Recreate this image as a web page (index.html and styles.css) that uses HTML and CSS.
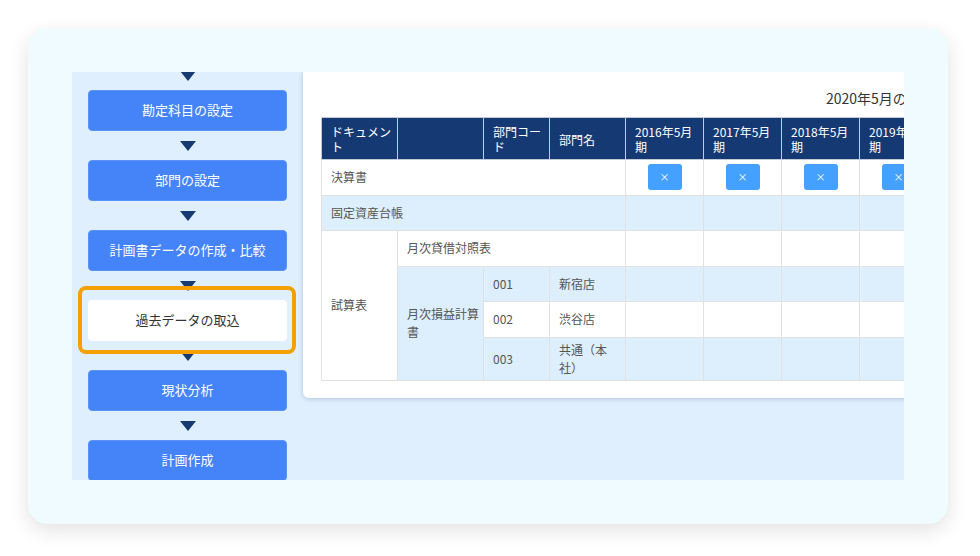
FILE: index.html
```html
<!DOCTYPE html>
<html lang="ja">
<head>
<meta charset="utf-8">
<link rel="stylesheet" href="styles.css">
</head>
<body>
<div class="frame">
  <div class="screen">
    <nav class="flow">
      <span class="arrow first"></span>
      <div class="step">勘定科目の設定</div>
      <span class="arrow"></span>
      <div class="step">部門の設定</div>
      <span class="arrow"></span>
      <div class="step">計画書データの作成・比較</div>
      <span class="arrow"></span>
      <div class="step current">過去データの取込</div>
      <span class="arrow"></span>
      <div class="step">現状分析</div>
      <span class="arrow"></span>
      <div class="step">計画作成</div>
    </nav>
    <main class="content">
      <section class="panel">
        <div class="panel-title">2020年5月の実績データ</div>
        <table class="grid">
          <colgroup>
            <col class="w76"><col class="w86"><col class="w66"><col class="w76">
            <col class="w78"><col class="w78"><col class="w78"><col class="w78"><col class="w78">
          </colgroup>
          <thead>
            <tr>
              <th>ドキュメント</th>
              <th></th>
              <th>部門コード</th>
              <th>部門名</th>
              <th>2016年5月期</th>
              <th>2017年5月期</th>
              <th>2018年5月期</th>
              <th>2019年5月期</th>
              <th>2020年5月期</th>
            </tr>
          </thead>
          <tbody>
            <tr>
              <td colspan="4">決算書</td>
              <td class="c"><span class="del">×</span></td>
              <td class="c"><span class="del">×</span></td>
              <td class="c"><span class="del">×</span></td>
              <td class="c"><span class="del">×</span></td>
              <td class="c"><span class="del">×</span></td>
            </tr>
            <tr class="alt">
              <td colspan="4">固定資産台帳</td>
              <td></td><td></td><td></td><td></td><td></td>
            </tr>
            <tr>
              <td rowspan="4" class="white">試算表</td>
              <td colspan="3">月次貸借対照表</td>
              <td></td><td></td><td></td><td></td><td></td>
            </tr>
            <tr class="alt">
              <td rowspan="3" class="blue">月次損益計算書</td>
              <td>001</td>
              <td>新宿店</td>
              <td></td><td></td><td></td><td></td><td></td>
            </tr>
            <tr>
              <td>002</td>
              <td>渋谷店</td>
              <td></td><td></td><td></td><td></td><td></td>
            </tr>
            <tr class="alt">
              <td>003</td>
              <td>共通（本社）</td>
              <td></td><td></td><td></td><td></td><td></td>
            </tr>
          </tbody>
        </table>
      </section>
    </main>
  </div>
</div>
</body>
</html>
```
FILE: styles.css
```css
html, body {
  margin: 0;
  padding: 0;
  background: #ffffff;
}
body {
  font-family: "Noto Sans CJK JP", "Noto Sans", sans-serif;
  width: 980px;
  height: 556px;
  overflow: hidden;
}
.frame {
  margin: 28px;
  width: 920px;
  height: 496px;
  box-sizing: border-box;
  padding: 44px;
  background: #f0fbff;
  border-radius: 20px;
  box-shadow: 0 6px 20px rgba(0, 0, 0, 0.12);
}
.screen {
  display: flex;
  height: 408px;
  background: #e0effd;
  overflow: hidden;
}
.flow {
  width: 231px;
  flex: none;
  display: flex;
  flex-direction: column;
  align-items: center;
}
.arrow {
  flex: none;
  width: 0;
  height: 0;
  border-left: 8px solid transparent;
  border-right: 8px solid transparent;
  border-top: 10px solid #173a70;
  margin: 10px 0 9px;
}
.arrow.first {
  margin-top: -1px;
}
.step {
  flex: none;
  width: 199px;
  height: 41px;
  box-sizing: border-box;
  padding-bottom: 2px;
  border-radius: 4px;
  background: #4584f8;
  border: 1px solid #5a93f8;
  color: #ffffff;
  font-size: 13px;
  display: flex;
  align-items: center;
  justify-content: center;
}
.step.current {
  position: relative;
  background: #ffffff;
  border-color: #ffffff;
  color: #333333;
}
.step.current::before {
  content: "";
  position: absolute;
  left: -11px;
  right: -10px;
  top: -15px;
  bottom: -14px;
  border: 4px solid #f5a000;
  border-radius: 8px;
}
.content {
  flex: 1;
  min-width: 0;
}
.panel {
  width: 730px;
  box-sizing: border-box;
  background: #ffffff;
  border-radius: 0 0 6px 6px;
  box-shadow: 0 1px 5px rgba(30, 70, 120, 0.25);
  padding: 16px 18px 17px;
}
.panel-title {
  font-size: 14px;
  line-height: 20px;
  color: #333333;
  padding-left: 505px;
  margin-bottom: 9px;
  white-space: nowrap;
}
.grid {
  border-collapse: collapse;
  table-layout: fixed;
  width: 694px;
  font-size: 12px;
}
.w76 { width: 76px; }
.w86 { width: 86px; }
.w66 { width: 66px; }
.w78 { width: 78px; }
.grid th {
  background: #153a73;
  color: #ffffff;
  font-weight: normal;
  text-align: left;
  vertical-align: middle;
  padding: 6px 4px 5px 9px;
  line-height: 15px;
  border: 1px solid #c4cbd8;
}
.grid tbody tr {
  height: 35.5px;
}
.grid td {
  color: #555555;
  padding: 3px 3px 3px 9px;
  line-height: 18px;
  vertical-align: middle;
  border: 1px solid #e1e1e1;
  background: #ffffff;
}
.grid tr.alt td {
  background: #ddeefc;
}
.grid td.white,
.grid tr.alt td.white {
  background: #ffffff;
}
.grid td.blue {
  background: #ddeefc;
}
.grid td.c {
  text-align: center;
  padding: 0;
}
.del {
  display: inline-block;
  width: 34px;
  height: 26px;
  border-radius: 3px;
  background: #45a1ff;
  color: #ffffff;
  font-size: 10px;
  line-height: 26px;
  text-align: center;
  vertical-align: middle;
}
```
